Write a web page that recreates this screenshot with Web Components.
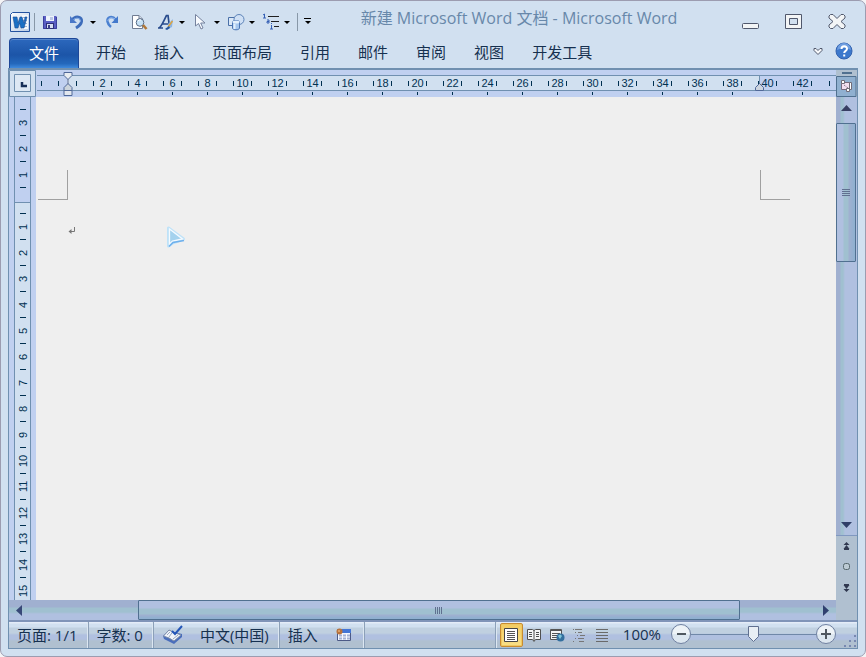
<!DOCTYPE html>
<html lang="zh-CN">
<head>
<meta charset="utf-8">
<title>新建 Microsoft Word 文档 - Microsoft Word</title>
<style>
  html, body { height: 100%; }
  body {
    margin: 0;
    background: #f4f4f6;
    overflow: hidden;
    color: #16304f;
    font: 15px/20px "Open Sans", "Noto Sans CJK SC", sans-serif;
    --frame: #d1e0f0;
    --line: #7090b0;
    --margin: #c0d0f0;
    --ink: #103050;
  }
</style>
</head>
<body>
<word-window>
  <quick-access slot="quick"></quick-access>
  <span slot="title">新建 Microsoft Word 文档 - Microsoft Word</span>
  <window-controls slot="controls"></window-controls>
  <ribbon-tabs slot="ribbon">
    <ribbon-tab active>文件</ribbon-tab>
    <ribbon-tab>开始</ribbon-tab>
    <ribbon-tab>插入</ribbon-tab>
    <ribbon-tab>页面布局</ribbon-tab>
    <ribbon-tab>引用</ribbon-tab>
    <ribbon-tab>邮件</ribbon-tab>
    <ribbon-tab>审阅</ribbon-tab>
    <ribbon-tab>视图</ribbon-tab>
    <ribbon-tab>开发工具</ribbon-tab>
  </ribbon-tabs>
  <work-area slot="work"></work-area>
  <status-bar slot="status">
    <status-item slot="left">页面: 1/1</status-item>
    <status-item slot="left">字数: 0</status-item>
    <status-item slot="left"><word-icon name="proof"></word-icon>中文(中国)</status-item>
    <status-item slot="left" wide>插入<word-icon name="macro"></word-icon></status-item>
    <view-switcher slot="right"></view-switcher>
    <zoom-control slot="right"></zoom-control>
  </status-bar>
</word-window>

<script>
const ICONS = {
  logo: [20, 20, `<defs><linearGradient id="a" x2="1" y2="1"><stop stop-color="#fff"/><stop offset="1" stop-color="#b9cbe4"/></linearGradient></defs>
    <path d="M2.500 .5H19.500V19.500H.5V2.500Z" fill="url(#a)" stroke="#2453a0"/><path d="M12 3H18V17H12Z" fill="#f5f8fc"/><path d="M13 5.500h4M13 8.500h4M13 11.500h4M13 14.500h4" stroke="#9cb4d4"/>
    <path d="M3 5h4l1 6 2-6h2l2 6 1-6h2l-3 11h-3l-1.500-5L8 16H5Z" fill="#1a6fc4" stroke="#1d4c96" stroke-width=".6"/>`],
  save: [18, 18, `<path d="M2 3h13l1 1v12H2Z" fill="#5a5fc4"/><path d="M2.500 3.500V15.500H15.500V4" fill="none" stroke="#3c3f9c"/><path d="M5 3h8v5H5Z" fill="#eef3fc"/><path d="M9 4h3v3H9Z" fill="#b9c6e6"/><path d="M5 10h8v6H5Z" fill="#2e3078"/><path d="M6 11h6v4H6Z" fill="#d7def2"/><path d="M7 12h2v4H7Z" fill="#3c3f88"/>`],
  undo: [18, 18, `<path d="M4 7C8 2 14 4 13.500 8.500C13 12 10.500 13.500 8 15" fill="none" stroke="#3d6cba" stroke-width="3"/><path d="M5 7C8 4 13 5 12.500 8.500" fill="none" stroke="#8eb3ea" stroke-width="1"/><path d="M2 3v7h7Z" fill="#4a78c8"/>`],
  redo: [18, 18, `<path d="M13 7C9 2 4 4 4.500 8.500C5 11 6 12.500 8 14" fill="none" stroke="#4a80d0" stroke-width="2.600"/><path d="M12 6C8 4 5 5 5 8" fill="none" stroke="#a5c4f0"/><path d="M15 3v7H8.500Z" fill="#4379cc"/>`],
  preview: [18, 18, `<path d="M2.500 2.500H9L12.500 6V15.500H2.500Z" fill="#fff" stroke="#707c92"/><path d="M9 2.500V6h3.500" fill="#d5deec" stroke="#707c92"/><circle cx="10" cy="9.500" r="3.800" fill="#c7e2f6" stroke="#596c86"/><path d="M8 8a2.500 2.500 0 0 1 3-1" stroke="#fff" fill="none"/><path d="M13 12l3.500 4" stroke="#b07838" stroke-width="2.600"/>`],
  effects: [18, 18, `<path d="M1.500 15C4 15 6.500 8 9.500 2.500H11L12.500 14M5 11h7M1 15h5" fill="none" stroke="#284b8c" stroke-width="1.700"/><path d="M11 11L16 6l-1 8-4 2Z" fill="#8bb5e7"/><path d="M11 14l4.500-6" stroke="#dba443" stroke-width="1.500"/><path d="M8 16l4-3 1 2-3 2Z" fill="#24559f"/>`],
  pointer: [18, 18, `<path d="M3.500 1.500V13l3-2.500L9 16l2-1-2.300-5H13Z" fill="#f8fbff" stroke="#75829e"/>`],
  shapes: [18, 18, `<path d="M1.500 4.500h10v8h-10Z" fill="#d9e7f7" stroke="#4a70a8"/><circle cx="12" cy="6.500" r="5" fill="#cfe0f5" stroke="#5c83b8"/><path d="M5.500 9v6c0 2.400 7 2.400 7 0V9c0-2-7-2-7 0" fill="#a5c6ee" stroke="#4a74b4"/><ellipse cx="9" cy="9" rx="3.500" ry="1.500" fill="#e3f0fd"/><path d="M7.500 11v5" stroke="#e3f0fd" stroke-width="2"/>`],
  list: [18, 18, `<path d="M6 3.500h11M9 8.500h8M13 8.500h4M12 13.500h5" stroke="#202020" stroke-width="1"/><path d="M2.500 1v4M1 2l1.500-1M1 5h3M5 7h2v3H5V8.500h2M9.500 10v1M9.500 12v4M8 16h3" stroke="#345fb4" fill="none"/>`],
  heart: [12, 10, `<path d="M2 2.500h2l2 2 2-2h2v2L6 8.500 2 4.500Z" fill="#f6f8fa" stroke="#50586c"/>`],
  help: [18, 18, `<circle cx="9" cy="9" r="8" fill="#3c78cc" stroke="#3362ae"/><path d="M2 8a7 7 0 0 1 14 0Q9 4 2 8" fill="#6f9ee0"/><path d="M6.500 7C6.500 3.500 12 3.500 12 6.700C12 9 9.200 8.700 9.200 11M9.200 12.500v2" fill="none" stroke="#fff" stroke-width="2"/>`],
  min: [18, 18, `<rect x=".5" y="10.500" width="16" height="5" rx="1" fill="#f3f5f6" stroke="#50586c"/>`],
  max: [18, 18, `<path d="M.5 1.500h16v14H.5Z" fill="#f3f5f6" stroke="#50586c"/><path d="M4.500 5.500h8v6h-8Z" fill="#d1e0f0" stroke="#50586c"/>`],
  close: [18, 18, `<path d="M2.500 1.500H5L9 5.500l4-4h2.500L17 3v2l-4 3.500 4 3.500v2l-1.500 1.500H13l-4-4-4 4H2.500L1 14v-2l4-3.500L1 5V3Z" fill="#f3f5f6" stroke="#50586c"/>`],
  tabstop: [27, 27, `<path d="M.5 .5h26v26H.5Z" fill="#d1e0f0" stroke="#7090b0"/><path d="M5.500 4.500h16v17h-16Z" fill="#dde8f4" stroke="#7090b0"/><path d="M13 12v4h5" fill="none" stroke="#183058" stroke-width="2.500"/>`],
  indent: [10, 26, `<path d="M5 8v6" stroke="#6b7590"/><path d="M1 1.500h8v3L5 8.500 1 4.500Z" fill="#e8ecf0" stroke="#506898"/><path d="M1 19.500v-3l4-4 4 4v3Z" fill="#ccd4dc" stroke="#506898"/><path d="M1 19.500h8v5H1Z" fill="#e2e7ee" stroke="#506898"/>`],
  rightindent: [10, 16, `<path d="M4.500 0v8" stroke="#7090b0"/><path d="M.5 14.500v-3l4-4 4 4v3Z" fill="#cdd4de" stroke="#506898"/>`],
  rulerbtn: [21, 21, `<path d="M.5 .5h19.500v20H.5Z" fill="#90b0d0" stroke="#507090"/><path d="M5.500 6.500h9v7h-9Z" fill="#f3dff0" stroke="#776b7e"/><path d="M5.500 4.500h3v3h-3ZM10.500 12.500h3v3h-3ZM13.500 6.500h2v7h-2Z" fill="#fff" stroke="#716c78"/><path d="M8 9l4 3" stroke="#705d72" stroke-dasharray="1 1"/>`],
  up: [11, 6, `<path d="M0 6 5.500 0 11 6Z" fill="#383f63"/>`],
  down: [11, 6, `<path d="M0 0 5.500 6 11 0Z" fill="#304068"/>`],
  left: [6, 11, `<path d="M6 0 0 5.500 6 11Z" fill="#384878"/>`],
  right: [6, 11, `<path d="M0 0 6 5.500 0 11Z" fill="#304070"/>`],
  prev: [7, 8, `<path d="M3.500 0 6.500 3H0.500ZM3.500 3 6.500 7H.5ZM1 7h5v1H1Z" fill="#303850"/>`],
  next: [7, 8, `<path d="M3.500 8 6.500 5H0.500ZM3.500 5 6.500 1H.5ZM1 0h5v1H1Z" fill="#303850"/>`],
  browse: [8, 8, `<rect x=".5" y=".5" width="6" height="6" rx="2" fill="#bccad3" stroke="#56666c"/>`],
  para: [8, 8, `<path d="M6.500 0v4.500H1" fill="none" stroke="#777"/><path d="M3.500 2v5L.5 4.500Z" fill="#777"/>`],
  mouse: [20, 24, `<path d="M2.500 3v18l4-3 11-4Z" fill="#89c4f0" stroke="#bfe2f8" stroke-width="3" stroke-linejoin="round"/><path d="M3.500 4v15l3-3 10-2Z" fill="#a4d2ee" stroke="#f4faff" stroke-width="1.300"/><path d="M3 21.500l4-4 11-2" fill="none" stroke="#6fb0ec" stroke-width="1.500"/>`],
  proof: [22, 20, `<path d="M1 11l6-6 5 2 8 2v3l-8 7-10-5Z" fill="#4a6ebb"/><path d="M1.500 11 7 5l4 2 8 3-7 6-5-3Z" fill="#f1f4fa" stroke="#7d8ca8"/><path d="M10.500 7 7 12M5 10l3-3M11 14l5-4" stroke="#9aa8be"/><path d="M10 6l3 3 7-8" fill="none" stroke="#2456b8" stroke-width="2"/>`],
  macro: [16, 14, `<path d="M1.500 1.500h13v11h-13Z" fill="#f5f8ff" stroke="#4c5a86"/><path d="M2 1h13v4H2Z" fill="#4476d6"/><path d="M3 7.500h11M3 10.500h11" stroke="#a6b2d4" stroke-width="2" stroke-dasharray="3 1"/><circle cx="3.500" cy="3.500" r="3" fill="#b9733c"/><circle cx="3" cy="3" r="1" fill="#e4aa70"/>`],
  vprint: [16, 14, `<path d="M1.500 .5h13v13h-13Z" fill="#fff" stroke="#454545"/><path d="M4 3.500h8M4 5.500h8M4 7.500h8M4 9.500h8M4 11.500h8" stroke="#555"/>`],
  vread: [16, 14, `<path d="M1.500 1.500h5l1.500 1 1.500-1h5v10h-5l-1.500 2-1.500-2h-5Z" fill="#f7f7f7" stroke="#505050"/><path d="M8 2v11M3 4.500h3M3 6.500h3M3 8.500h3M10 4.500h3M10 6.500h3M10 8.500h3" stroke="#505050"/>`],
  vweb: [16, 14, `<path d="M1.500 1.500h11v10h-11Z" fill="#f4f4f4" stroke="#555"/><path d="M1 2.500h12M3 5.500h8M3 7.500h8M3 9.500h5" stroke="#555"/><circle cx="11.500" cy="9.500" r="4" fill="#346f9e"/><path d="M9 8q2-3 4 0l-2 3Z" fill="#7ec4d8"/>`],
  voutline: [16, 14, `<path d="M1 1.500h1M3 1.500h7M3 4.500h1M6 4.500h4M5 7.500h1M8 7.500h5M3 10.500h1M6 10.500h6M1 13.500h1M7 13.500h5" stroke="#777"/>`],
  vdraft: [16, 14, `<path d="M1 1.500h12M1 4.500h12M1 7.500h12M1 10.500h12M1 13.500h12" stroke="#6a6a6a"/>`],
  minus: [20, 20, `<circle cx="10" cy="10" r="9.500" fill="#dde7f0" stroke="#7080a0"/><path d="M1.500 10a8.500 8.500 0 0 1 17 0Z" fill="#eef3f7"/><path d="M6 10h9" stroke="#505860" stroke-width="2"/>`],
  plus: [20, 20, `<circle cx="10" cy="10" r="9.500" fill="#dde7f0" stroke="#7080a0"/><path d="M1.500 10a8.500 8.500 0 0 1 17 0Z" fill="#eef3f7"/><path d="M5 10h10M10 5v10" stroke="#505860" stroke-width="2"/>`],
  grip: [14, 14, `<path d="M11 1h2v2h-2ZM6 6h2v2H6ZM11 6h2v2h-2ZM1 11h2v2H1ZM6 11h2v2H6ZM11 11h2v2h-2Z" fill="#7888b0"/>`]
};

const RESET = `*{box-sizing:border-box}button{appearance:none;border:0;padding:0;margin:0;background:none;font:inherit;color:inherit;display:grid;place-items:center}`;

function define(tag, render) {
  customElements.define(tag, class extends HTMLElement {
    connectedCallback() {
      if (this.shadowRoot) return;
      const t = document.createElement('template');
      t.innerHTML = render(this);
      this.attachShadow({ mode: 'open' }).append(t.content.cloneNode(true));
    }
  });
}
const icon = n => `<word-icon name="${n}"></word-icon>`;

define('word-icon', el => {
  const [w, h, body] = ICONS[el.getAttribute('name')];
  return `<style>:host{display:inline-block;flex:none;line-height:0}svg{display:block}</style>
    <svg width="${w}" height="${h}" viewBox="0 0 ${w} ${h}" aria-hidden="true">${body}</svg>`;
});

define('word-window', () => `<style>${RESET}
  :host{display:flex;flex-direction:column;box-sizing:border-box;height:100vh;background:var(--frame);border:1px solid #9c9cb0;border-radius:7px;padding:0 7px 7px 7px}
  header{display:flex;height:36px;align-items:center;padding:6px 10px 0 2px}
  h1{flex:1;margin:0 15px 8px 0;font:inherit;font-size:16px;color:#6888aa;text-align:center;white-space:nowrap}
  .frame{flex:1;min-height:0;display:flex;flex-direction:column;border:1px solid var(--line);border-top-width:2px}
  </style>
  <header><slot name="quick"></slot><h1><slot name="title"></slot></h1><slot name="controls"></slot></header>
  <slot name="ribbon"></slot>
  <div class="frame"><slot name="work"></slot><slot name="status"></slot></div>`);

define('tool-button', el => `<style>${RESET}
  :host{display:flex;width:${el.hasAttribute('menu') ? 35 : 27}px;height:20px}
  .main{width:18px;height:20px}
  .menu{width:13px;height:20px}
  .menu::before{content:"";border:3px solid transparent;border-top-color:#000;border-bottom:0}
  </style><button class="main" aria-label="${el.getAttribute('label')}">${icon(el.getAttribute('icon'))}</button>
  ${el.hasAttribute('menu') ? '<button class="menu" aria-label="更多选项"></button>' : ''}`);

define('quick-access', () => `<style>${RESET}
  :host{display:flex;align-items:center}
  i{width:1px;height:18px;background:#8898a8;margin:0 6px 0 4px}
  i.end{margin:0 6px 0 0}
  .custom{width:7px;height:8px;border-top:1px solid #000}
  .custom::before{content:"";border:3px solid transparent;border-top-color:#000;border-bottom:0}
  </style>${icon('logo')}<i></i>
  <tool-button icon="save" label="保存"></tool-button>
  <tool-button icon="undo" label="撤消" menu></tool-button>
  <tool-button icon="redo" label="重复"></tool-button>
  <tool-button icon="preview" label="打印预览"></tool-button>
  <tool-button icon="effects" label="文本效果" menu></tool-button>
  <tool-button icon="pointer" label="选择" menu></tool-button>
  <tool-button icon="shapes" label="形状" menu></tool-button>
  <tool-button icon="list" label="多级列表" menu></tool-button>
  <i class="end"></i><button class="custom" aria-label="自定义快速访问工具栏"></button>`);

define('window-controls', () => `<style>${RESET}
  :host{display:flex;gap:25px;padding-right:2px}</style>
  <button aria-label="最小化">${icon('min')}</button><button aria-label="最大化">${icon('max')}</button><button aria-label="关闭">${icon('close')}</button>`);

define('ribbon-tabs', () => `<style>${RESET}
  :host{display:flex;height:31px;align-items:stretch;padding:0 5px 0 1px}
  nav{display:flex;flex:1}
  .end{display:flex;align-items:center;gap:11px;padding-bottom:3px}
  </style><nav><slot></slot></nav><div class="end"><button aria-label="功能区最小化">${icon('heart')}</button><button aria-label="帮助">${icon('help')}</button></div>`);

define('ribbon-tab', () => `<style>${RESET}
  :host{display:flex}
  button{padding:0 14px 1px;height:31px;white-space:nowrap}
  :host([active]) button{padding:0 19px 2px;margin-right:3px;height:30px;margin-top:1px;color:#fff;border:1px solid #1d4798;border-bottom:0;border-radius:4px 4px 0 0;
    background:linear-gradient(#2c68bd,#1c55a8 55%,#2468bc 85%,#3f8add);box-shadow:inset 0 1px #5888cc}
  </style><button><slot></slot></button>`);

define('work-area', () => `<style>${RESET}
  :host{flex:1;min-height:0;display:grid;grid-template:27px minmax(0,1fr) 20px / 27px minmax(0,1fr) 21px}
  .corner{background:var(--margin)}
  h-scroll{grid-column:1/3}
  v-scroll{grid-area:1/3/4/4}
  </style>
  <div class="corner"><button aria-label="制表符">${icon('tabstop')}</button></div>
  <h-ruler></h-ruler><v-ruler></v-ruler><document-page></document-page><h-scroll></h-scroll><v-scroll></v-scroll>`);

define('h-ruler', () => {
  let cells = '<span class="part"></span><span class="cell"></span>';
  for (let n = 2; n <= 42; n += 2) cells += `<span class="cell${n === 40 ? ' nolow' : ''}"><b>${n}</b></span>`;
  return `<style>${RESET}
  :host{display:block;position:relative;background:var(--margin);padding:5px 0 6px 1px;overflow:hidden;font:11px/14px "Liberation Sans",sans-serif;color:#003050}
  .band{height:16px;display:flex;border:solid var(--line);border-width:1px 0;background:linear-gradient(var(--frame),var(--frame)) 31px 0/692px 100% no-repeat}
  .cell{flex:none;width:35px;height:14px;display:flex;align-items:center;justify-content:space-between;padding:0 8px;position:relative}
  b{font-weight:400;position:absolute;inset:0;text-align:center}
  .cell::before,.cell::after{content:"";width:1px;height:5px;background:#003050}
  b::after{content:"";position:absolute;left:17px;top:16px;width:1px;height:3px;background:#003050}
  .nolow b::after{display:none}
  .part{flex:none;width:13px;display:flex;align-items:center;padding-left:4px}
  .part.last{width:16px;padding-left:9px}
  .part::before{content:"";width:1px;height:5px;background:#003050}
  .first,.end{position:absolute}
  .first{left:27px;top:1px}.end{left:719px;top:6px}
  </style><div class="band">${cells}<span class="part last"></span></div><word-icon class="first" name="indent"></word-icon><word-icon class="end" name="rightindent"></word-icon>`;
});

define('v-ruler', () => {
  let cells = '';
  for (const n of [3, 2, 1, '', 1, 2, 3, 4, 5, 6, 7, 8, 9, 10, 11, 12, 13, 14, 15]) cells += `<span><b>${n}</b></span>`;
  return `<style>${RESET}
  :host{display:block;min-height:0;overflow:hidden;background:var(--margin);padding:0 5px;font:11px/14px "Liberation Sans",sans-serif;color:#003050}
  .band{min-height:100%;border:solid var(--line);border-width:0 1px;padding-top:12px;background:linear-gradient(var(--line) 1px,var(--frame) 1px) 0 105px no-repeat}
  span{display:flex;flex-direction:column;align-items:center;height:26px}
  span::before{content:"";width:6px;height:1px;background:#003050}
  b{flex:1;font-weight:400;writing-mode:vertical-rl;transform:rotate(180deg);text-align:center}
  </style><div class="band">${cells}</div>`;
});

define('document-page', () => `<style>${RESET}
  :host{display:block;position:relative;background:#efefef;overflow:hidden;padding:73px 46px 0 2px}
  .marks{display:flex;justify-content:space-between}
  .marks i{width:30px;height:30px;border:solid #a0a0a0;border-width:0 1px 1px 0}
  .marks i+i{border-width:0 0 1px 1px}
  article{padding:27px 30px;min-height:200px;outline:0;line-height:0}
  .mouse{position:absolute;left:130px;top:128px}
  </style><div class="marks"><i></i><i></i></div>
  <article role="textbox" aria-label="文档">${icon('para')}</article><word-icon class="mouse" name="mouse"></word-icon>`);

define('h-scroll', () => `<style>${RESET}
  :host{display:flex;background:linear-gradient(#a0b0d0 7px,#a0c0d0 8px,#a0c0d0 12px,#b0c0e0 14px)}
  button{width:20px;height:20px}
  .a{flex:109}.c{flex:76}
  .thumb{flex:602;display:flex;justify-content:center;align-items:center;gap:1px;border:1px solid #507090;border-radius:1px;background:linear-gradient(#b0c0e0 7px,#a0c0d0 8px,#a0c0d0 13px,#a0b0d0 14px,#90b0d0 17px)}
  .thumb i{width:1px;height:7px;background:#607090}
  </style><button aria-label="向左滚动">${icon('left')}</button><div class="a"></div><div class="thumb"><i></i><i></i><i></i><i></i></div><div class="c"></div><button aria-label="向右滚动">${icon('right')}</button>`);

define('v-scroll', () => `<style>${RESET}
  :host{display:flex;flex-direction:column;background:#b0c0d0}
  .split{height:6px;width:100%;display:grid;place-items:center}
  .split::before{content:"";width:10px;height:2px;background:#507090}
  .bar{flex:1;display:flex;flex-direction:column;border-bottom:1px solid #8098c0;background:linear-gradient(90deg,#a0b0d0 4px,#a0c0d0 5px,#a0c0d0 7px,#b0c0e0 9px)}
  .bar button{width:21px;height:26px;padding-bottom:4px}
  .bar button:last-child{height:20px;padding:0}
  .thumb{flex:138;width:20px;display:flex;flex-direction:column;justify-content:center;align-items:center;gap:1px;border:1px solid #507090;border-radius:1px;background:linear-gradient(90deg,#b0c0e0 6px,#a0c0d0 7px,#a0c0d0 11px,#a0b0d0 12px,#90b0d0 17px)}
  .thumb i{width:8px;height:1px;background:#607090}
  .rest{flex:255}
  .browse{height:84px;display:flex;flex-direction:column;align-items:center;gap:13px;padding-top:6px}
  </style><button class="split" aria-label="拆分"></button><button aria-label="标尺">${icon('rulerbtn')}</button>
  <div class="bar"><button aria-label="向上滚动">${icon('up')}</button><div class="thumb"><i></i><i></i><i></i><i></i></div><div class="rest"></div><button aria-label="向下滚动">${icon('down')}</button></div>
  <div class="browse"><button aria-label="前一页">${icon('prev')}</button><button aria-label="选择浏览对象">${icon('browse')}</button><button aria-label="下一页">${icon('next')}</button></div>`);

define('status-bar', () => `<style>${RESET}
  :host{box-sizing:border-box;display:flex;height:28px;border-top:2px solid #8094b8;background:linear-gradient(#e4ecf8 1px,#d1e0f0 2px,#d1e0f0 5px,#c0d0e0 6px,#c0d0e0 11px,#b0c0e0 13px,#b0c0e0 17px,#b0c0d0 19px)}
  .left,.right{display:flex;align-items:stretch}
  .right{margin-left:auto;border-left:1px solid #8ca0b8;box-shadow:inset 1px 0 #dce7f2;padding-left:4px}
  word-icon{align-self:end}
  </style><div class="left"><slot name="left"></slot></div><div class="right"><slot name="right"></slot>${icon('grip')}</div>`);

define('status-item', () => `<style>${RESET}
  :host{display:flex;border-right:1px solid #8ca0b8;box-shadow:inset -1px 0 #dce7f2;white-space:nowrap}
  button{display:flex;align-items:center;gap:16px;padding:0 10px 1px 8px}
  :host([wide]) button{gap:18px;padding-right:12px}
  </style><button><slot></slot></button>`);

define('view-switcher', () => `<style>${RESET}
  :host{display:flex;align-items:center}
  button{width:23px;height:24px}
  .on{border:1px solid #c88c30;border-radius:2px;background:linear-gradient(#f4cc60,#f8e088);box-shadow:inset 0 0 0 1px #f0c860}
  </style><button class="on" aria-label="页面视图" aria-pressed="true">${icon('vprint')}</button><button aria-label="阅读版式">${icon('vread')}</button><button aria-label="Web 版式">${icon('vweb')}</button><button aria-label="大纲">${icon('voutline')}</button><button aria-label="草稿">${icon('vdraft')}</button>`);

define('zoom-control', () => `<style>${RESET}
  :host{display:flex;align-items:center;padding:0 7px 2px 8px}
  .value{margin-right:10px}
  input{appearance:none;width:125px;height:20px;margin:0;background:linear-gradient(#7088a8,#7088a8) 0 10px/100% 1px no-repeat}
  input::-webkit-slider-thumb{appearance:none;width:11px;height:16px;background:url("data:image/svg+xml,%3Csvg xmlns='http://www.w3.org/2000/svg' width='11' height='16'%3E%3Cpath d='M.5.5h10v10l-5 5-5-5Z' fill='%23e8eef4' stroke='%23607090'/%3E%3C/svg%3E")}
  </style><button class="value">100%</button><button aria-label="缩小">${icon('minus')}</button><input type="range" min="0" max="200" value="100" aria-label="显示比例"><button aria-label="放大">${icon('plus')}</button>`);
</script>
</body>
</html>
